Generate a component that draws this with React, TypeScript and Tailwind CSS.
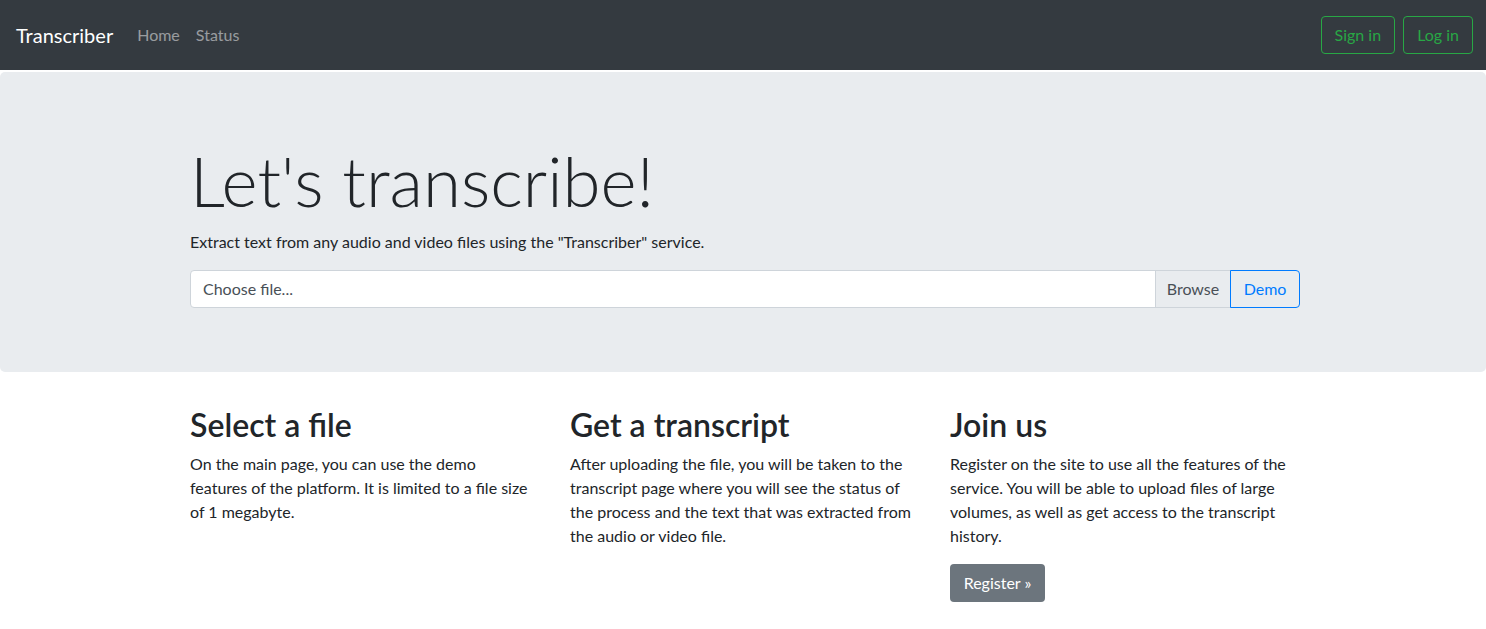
const features = [
  {
    title: "Select a file",
    text: "On the main page, you can use the demo\nfeatures of the platform. It is limited to a file size\nof 1 megabyte.",
  },
  {
    title: "Get a transcript",
    text: "After uploading the file, you will be taken to the transcript page where you will see the status of the process and the text that was extracted from the audio or video file.",
  },
  {
    title: "Join us",
    text: "Register on the site to use all the features of the service. You will be able to upload files of large volumes, as well as get access to the transcript history.",
    button: true,
  },
];

export default function App() {
  return (
    <div className="min-h-screen bg-white text-[#212529] font-['Lato',sans-serif] text-base leading-6">
      {/* navbar */}
      <nav className="h-[70px] bg-[#343a40] flex items-center pl-4 pr-[13px]">
        <a className="text-white text-xl leading-[30px] mr-4">Transcriber</a>
        <div className="flex">
          <a className="px-2 text-white/50">Home</a>
          <a className="px-2 text-white/50">Status</a>
        </div>
        <div className="ml-auto flex gap-2">
          <button className="h-[38px] px-[13px] border border-[#28a745] text-[#28a745] rounded">Sign in</button>
          <button className="h-[38px] px-[13px] border border-[#28a745] text-[#28a745] rounded">Log in</button>
        </div>
      </nav>

      {/* jumbotron */}
      <div className="mt-[2px] bg-[#e9ecef] rounded-[5px] py-16">
        <div className="w-[1110px] ml-[190px]">
          <h1 className="text-[69px] font-light leading-[86px] pt-[2px] mb-[6px]">Let's transcribe!</h1>
          <p className="mb-4">Extract text from any audio and video files using the "Transcriber" service.</p>
          <div className="flex h-[38px]">
            <div className="flex-1 flex bg-white border border-[#ced4da] rounded-l">
              <span className="flex-1 px-3 py-1.5 text-[#495057]">Choose file...</span>
              <span className="w-[75px] flex items-center justify-center bg-[#e9ecef] border-l border-[#ced4da] text-[#495057]">
                Browse
              </span>
            </div>
            <button className="w-[70px] -ml-px border border-[#007bff] text-[#007bff] rounded-r">Demo</button>
          </div>
        </div>
      </div>

      {/* features */}
      <div className="mt-[34px] w-[1140px] ml-[175px] grid grid-cols-3">
        {features.map((f) => (
          <div key={f.title} className="px-[15px]">
            <h2 className="text-[32px] font-semibold leading-[38px] mb-2">{f.title}</h2>
            <p className="mb-4 whitespace-pre-line">{f.text}</p>
            {f.button && (
              <button className="h-[38px] w-[95px] bg-[#6c757d] text-white rounded">Register »</button>
            )}
          </div>
        ))}
      </div>
    </div>
  );
}
